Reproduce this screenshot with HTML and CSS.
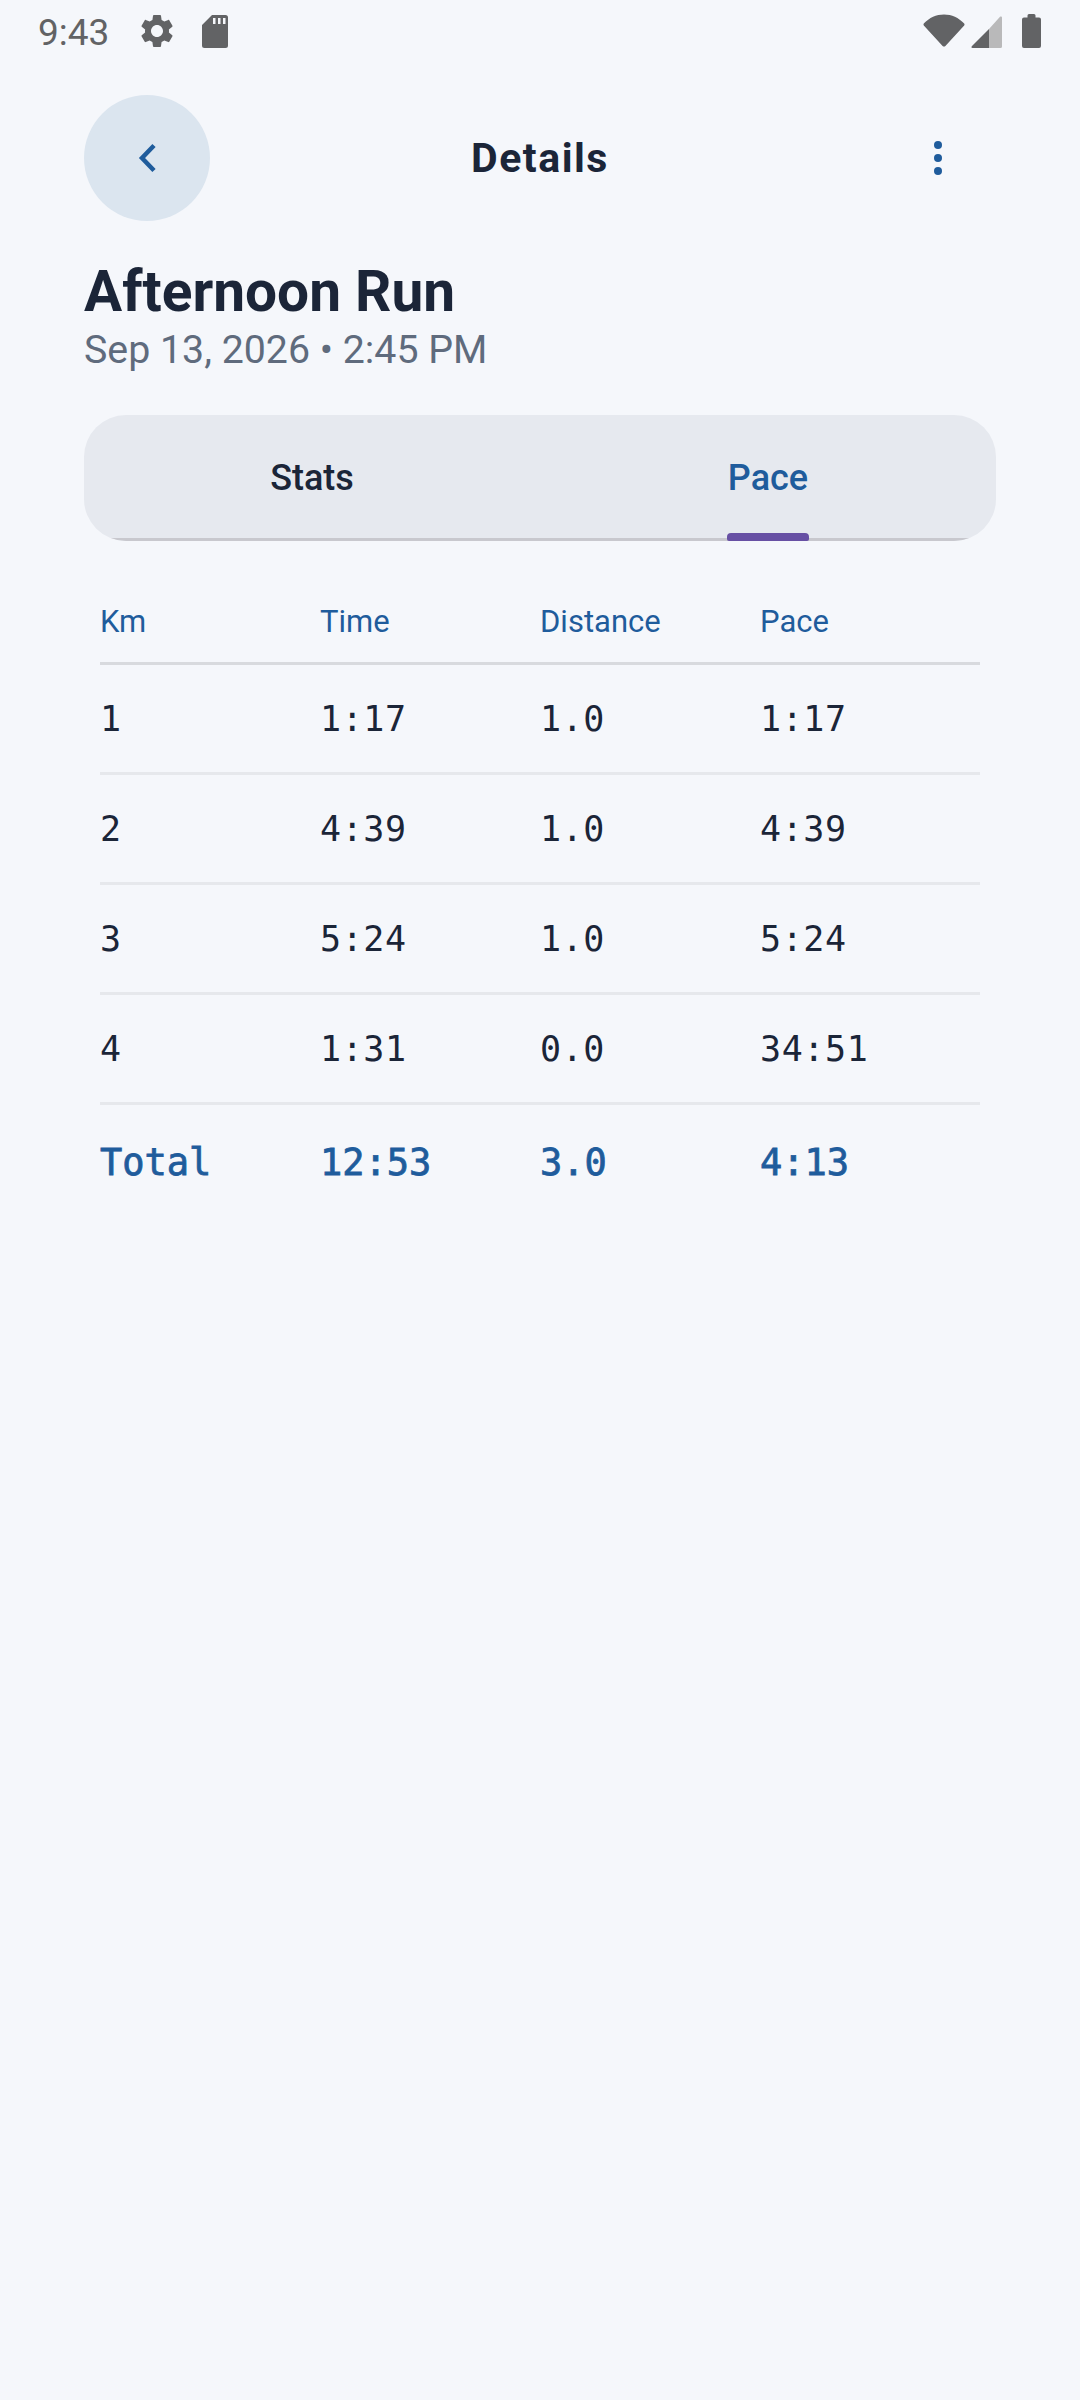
FILE: index.html
```html
<!DOCTYPE html>
<html lang="en">
<head>
    <meta charset="UTF-8">
    <meta name="viewport" content="width=device-width, initial-scale=1.0">
    <title>Details</title>
    <link rel="stylesheet" href="styles.css">
</head>
<body>
    <!-- Status bar -->
    <div class="status-bar">
        <span class="status-time">9:43</span>
        <svg class="icon-gear" viewBox="0 0 24 24"><path d="M19.14 12.94c.04-.3.06-.61.06-.94 0-.32-.02-.64-.07-.94l2.03-1.58c.18-.14.23-.41.12-.61l-1.92-3.32c-.12-.22-.37-.29-.59-.22l-2.39.96c-.5-.38-1.03-.7-1.62-.94l-.36-2.54c-.04-.24-.24-.41-.48-.41h-3.84c-.24 0-.43.17-.47.41l-.36 2.54c-.59.24-1.13.57-1.62.94l-2.39-.96c-.22-.08-.47 0-.59.22L2.74 8.87c-.12.21-.08.47.12.61l2.03 1.58c-.05.3-.09.63-.09.94s.02.64.07.94l-2.03 1.58c-.18.14-.23.41-.12.61l1.92 3.32c.12.22.37.29.59.22l2.39-.96c.5.38 1.03.7 1.62.94l.36 2.54c.05.24.24.41.48.41h3.84c.24 0 .44-.17.47-.41l.36-2.54c.59-.24 1.13-.56 1.62-.94l2.39.96c.22.08.47 0 .59-.22l1.92-3.32c.12-.22.07-.47-.12-.61l-2.01-1.58zM12 15.6c-1.98 0-3.6-1.62-3.6-3.6s1.62-3.6 3.6-3.6 3.6 1.62 3.6 3.6-1.62 3.6-3.6 3.6z"/></svg>
        <svg class="icon-sd" viewBox="0 0 26 33"><path fill-rule="evenodd" d="M10 0H23.5A2.5 2.5 0 0 1 26 2.5V30.5A2.5 2.5 0 0 1 23.5 33H2.5A2.5 2.5 0 0 1 0 30.5V10ZM11 3V9H13.5V3ZM16 3V9H18.5V3ZM21 3V9H23.5V3Z"/></svg>
        <span class="status-gap"></span>
        <svg class="icon-wifi" viewBox="0 0 42 33"><path d="M0.8 9.6C6.4 3.6 13.2 0.5 21 0.5S35.6 3.6 41.2 9.6C41.7 10.2 41.7 10.8 41.2 11.4L22.4 31.9C21.6 32.8 20.4 32.8 19.6 31.9L0.8 11.4C0.3 10.8 0.3 10.2 0.8 9.6Z"/></svg>
        <svg class="icon-signal" viewBox="0 0 31 32"><path class="signal-off" d="M18 13V32H29.5A1.5 1.5 0 0 0 31 30.5V1.6C31 .4 29.8 0 29 .8Z"/><path d="M18 13L1 30C0 31 .4 32 1.5 32H18Z"/></svg>
        <svg class="icon-battery" viewBox="0 0 19 34"><path d="M5.5 3.5V1.5A1.5 1.5 0 0 1 7 0H12A1.5 1.5 0 0 1 13.500 1.500V3.500H17A2 2 0 0 1 19 5.500V32A2 2 0 0 1 17 34H2A2 2 0 0 1 0 32V5.500A2 2 0 0 1 2 3.500Z"/></svg>
    </div>

    <div class="content">
        <!-- Top bar -->
        <div class="top-bar">
            <div class="back-button">
                <svg viewBox="0 0 20 30"><path d="M17 2.500L5 15L17 27.500"/></svg>
            </div>
            <div class="top-title">Details</div>
            <div class="more-button">
                <span></span><span></span><span></span>
            </div>
        </div>

        <h1 class="run-title">Afternoon Run</h1>
        <div class="run-date">Sep 13, 2026 &bull; 2:45 PM</div>

        <!-- Tabs -->
        <div class="tabs">
            <div class="tab">Stats</div>
            <div class="tab active"><span class="tab-label">Pace</span></div>
        </div>

        <!-- Splits table -->
        <div class="splits">
            <div class="row head">
                <div>Km</div><div>Time</div><div>Distance</div><div>Pace</div>
            </div>
            <div class="row">
                <div>1</div><div>1:17</div><div>1.0</div><div>1:17</div>
            </div>
            <div class="row">
                <div>2</div><div>4:39</div><div>1.0</div><div>4:39</div>
            </div>
            <div class="row">
                <div>3</div><div>5:24</div><div>1.0</div><div>5:24</div>
            </div>
            <div class="row">
                <div>4</div><div>1:31</div><div>0.0</div><div>34:51</div>
            </div>
            <div class="row total">
                <div>Total</div><div>12:53</div><div>3.0</div><div>4:13</div>
            </div>
        </div>
    </div>
</body>
</html>
```
FILE: styles.css
```css
body {
    margin: 0;
    width: 1080px;
    height: 2400px;
    overflow: hidden;
    background-color: #f5f7fb;
    font-family: Roboto, sans-serif;
    color: #1b2538;
}

/* Status bar */
.status-bar {
    height: 64px;
    display: flex;
    align-items: flex-start;
    padding: 14px 39px 0 38px;
    box-sizing: border-box;
    color: #626365;
    fill: #626365;
}
.status-time {
    font-size: 37px;
    line-height: 36px;
    margin-top: 1px;
}
.icon-gear {
    width: 40px;
    height: 40px;
    margin: -3px 0 0 28px;
}
.icon-sd {
    width: 26px;
    height: 33px;
    margin: 1px 0 0 25px;
}
.status-gap {
    flex: 1;
}
.icon-wifi {
    width: 42px;
    height: 33px;
}
.icon-signal {
    width: 31px;
    height: 32px;
    margin: 2px 0 0 6px;
}
.signal-off {
    fill: #b9b9ba;
}
.icon-battery {
    width: 19px;
    height: 34px;
    margin-left: 20px;
}

.content {
    padding: 0 84px;
}

/* Top bar */
.top-bar {
    height: 126px;
    margin-top: 31px;
    display: flex;
    align-items: center;
}
.back-button {
    width: 126px;
    height: 126px;
    border-radius: 50%;
    background-color: #dbe5ef;
    display: flex;
    justify-content: center;
    align-items: center;
}
.back-button svg {
    width: 20px;
    height: 30px;
    fill: none;
    stroke: #1f5c9c;
    stroke-width: 4.500;
}
.top-title {
    flex: 1;
    text-align: center;
    font-size: 41px;
    font-weight: 700;
    letter-spacing: 1.500px;
}
.more-button {
    width: 126px;
    padding-left: 10px;
    box-sizing: border-box;
    display: flex;
    flex-direction: column;
    align-items: center;
    gap: 4.500px;
}
.more-button span {
    width: 8.500px;
    height: 8.500px;
    border-radius: 50%;
    background-color: #1f5c9c;
}

.run-title {
    margin: 38px 0 0;
    font-size: 56.800px;
    line-height: 66px;
    font-weight: 700;
}
.run-date {
    font-size: 39.300px;
    line-height: 50px;
    color: #5f6b7d;
}

/* Tabs */
.tabs {
    margin-top: 40px;
    height: 126px;
    display: flex;
    position: relative;
    overflow: hidden;
    background-color: #e6e9ef;
    border-radius: 42px;
}
/* Hairline along the bottom edge, cut off by the rounded corners */
.tabs::after {
    content: "";
    position: absolute;
    left: 0;
    right: 0;
    bottom: 0;
    height: 3px;
    background-color: #c8c8ce;
}
.tab {
    flex: 1;
    display: flex;
    justify-content: center;
    align-items: center;
    font-size: 36px;
    font-weight: 500;
}
.tab.active {
    color: #1f5c9c;
}
.tab-label {
    position: relative;
}
/* Purple marker under the selected tab */
.tab-label::after {
    content: "";
    position: absolute;
    z-index: 1;
    left: -1px;
    right: -1px;
    top: 76px;
    height: 8px;
    border-radius: 4px 4px 2px 2px;
    background-color: #6750a4;
}

/* Splits table */
.splits {
    margin: 40px 16px 0;
}
.row {
    display: grid;
    grid-template-columns: repeat(4, 1fr);
    align-items: center;
    height: 110px;
    box-sizing: border-box;
    font-family: "DejaVu Sans Mono", monospace;
    font-size: 35px;
    letter-spacing: 0.600px;
    border-bottom: 3px solid #e6e8ec;
}
.row.head {
    height: 84px;
    font-family: Roboto, sans-serif;
    font-size: 31px;
    letter-spacing: 0;
    color: #1f5c9c;
    border-bottom-color: #d8dade;
}
/* The mono face only has regular and a heavy bold, so thicken the regular */
.row.total {
    height: 114px;
    font-size: 37px;
    letter-spacing: 0;
    -webkit-text-stroke: 0.800px #1f5c9c;
    color: #1f5c9c;
    border-bottom: none;
}
```
